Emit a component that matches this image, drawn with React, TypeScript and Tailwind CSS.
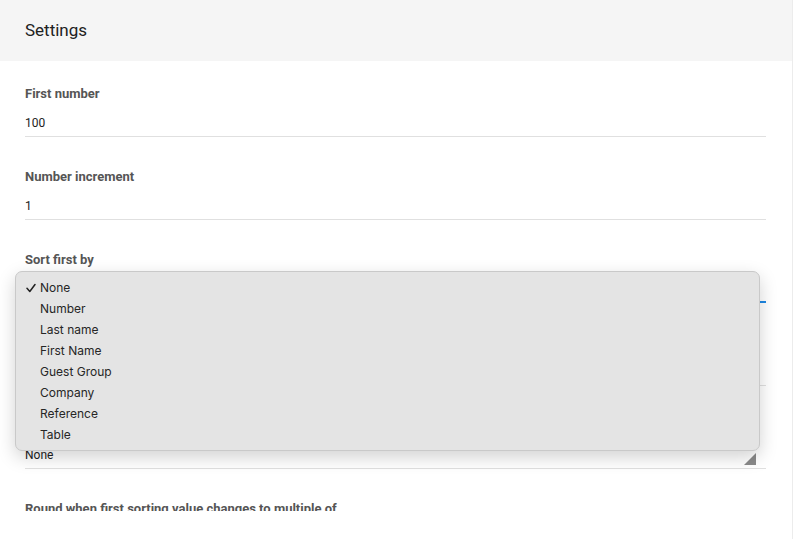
import React from 'react';

type Field = { label: string; value: string; active?: boolean; select?: boolean };

const fields: Field[] = [
    { label: 'First number', value: '100' },
    { label: 'Number increment', value: '1' },
    { label: 'Sort first by', value: 'None', active: true },
    { label: 'Sort second by', value: 'None' },
    { label: 'Sort third by', value: 'None', select: true },
    { label: 'Round when first sorting value changes to multiple of', value: '1' },
];

const options = ['None', 'Number', 'Last name', 'First Name', 'Guest Group', 'Company', 'Reference', 'Table'];

const App: React.FC = () => {
    return (
        <div className="relative w-[794px] h-[539px] bg-white font-['Roboto',sans-serif] overflow-hidden">
            <div className="w-[793px] h-full border-r border-[#ececec]">
                <div className="h-[61px] bg-[#f5f5f5] px-[25px] flex items-center">
                    <h1 className="text-[17px] text-[#212121] leading-none">Settings</h1>
                </div>
                <div className="h-[450px] overflow-hidden pl-[25px] pr-[26px] pt-[25px]">
                    {fields.map((f, i) => (
                        <div key={f.label} className={i > 0 ? 'mt-[32px]' : ''}>
                            <div className="text-[13px] leading-4 font-bold text-[#555] whitespace-nowrap">{f.label}</div>
                            <div
                                className={`mt-[13px] flex items-end justify-between ${f.active ? 'pb-[4px] border-b-2 border-[#1e88e5]' : 'pb-[5px] border-b border-[#e0e0e0]'}`}
                            >
                                <span className="text-[12px] leading-4 text-[#222]">{f.value}</span>
                                {f.select && (
                                    <svg width="12" height="12" viewBox="0 0 12 12" className="mr-[10px] -mb-[2px]">
                                        <polygon points="12,0 12,12 0,12" fill="#8a8a8a" />
                                    </svg>
                                )}
                            </div>
                        </div>
                    ))}
                </div>
            </div>

            {/* native select popup */}
            <div className="absolute left-[15px] top-[271px] w-[745px] bg-[#e4e4e4] border border-[#c9c9c9] rounded-[7px] shadow-[0_6px_18px_rgba(0,0,0,0.18)] py-[5px] font-['Inter',sans-serif]">
                {options.map((o, i) => (
                    <div key={o} className="relative h-[21px] flex items-center pl-[24px] text-[12px] text-[#262626]">
                        {i === 0 && (
                            <svg width="10" height="10" viewBox="0 0 10 10" className="absolute left-[10px] top-[6px]">
                                <path d="M1 5.3 L3.8 8.5 L9 1.5" fill="none" stroke="#222" strokeWidth="1.5" strokeLinecap="round" strokeLinejoin="round" />
                            </svg>
                        )}
                        {o}
                    </div>
                ))}
            </div>
        </div>
    );
};

export default App;
